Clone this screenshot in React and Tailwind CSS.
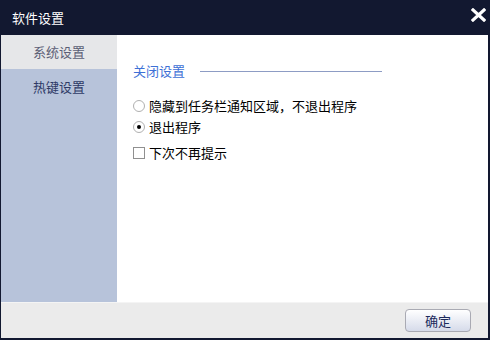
export default function App() {
    const font = { fontFamily: '"Noto Sans CJK SC", "Liberation Sans", sans-serif' };
    return (
        <div className="w-[490px] h-[340px] bg-[#121830] flex flex-col" style={font}>
            <div className="h-[35px] flex items-center justify-between pl-[12px] pr-[4px] shrink-0">
                <span className="text-[13px] text-white">软件设置</span>
                <svg width="15" height="14" viewBox="0 0 15 14" className="mb-[5px]">
                    <path d="M2 2 L13 12 M13 2 L2 12" stroke="#ffffff" strokeWidth="3.2" strokeLinecap="square" />
                </svg>
            </div>
            <div className="flex-1 flex flex-col ml-[1px] mr-[2px] mb-[2px] bg-white">
                <div className="flex flex-1">
                    <div className="w-[116px] bg-[#b7c3da] flex flex-col">
                        <div className="h-[34px] bg-[#e6e7e9] flex items-center justify-center text-[13px] text-[#5c6076]">
                            系统设置
                        </div>
                        <div className="h-[36px] flex items-center justify-center text-[13px] text-[#2e3a66]">
                            热键设置
                        </div>
                    </div>
                    <div className="flex-1 pl-[16px] pt-[27px]">
                        <div className="flex items-center h-[18px]">
                            <span className="text-[13px] text-[#3d70d6]">关闭设置</span>
                            <div className="ml-[15px] w-[182px] h-px bg-[#8d9cc4]" />
                        </div>
                        <div className="mt-[15px] flex flex-col">
                            <label className="flex items-center h-[21px]">
                                <span className="w-[12px] h-[12px] rounded-full border border-[#b0b0b0] bg-white" />
                                <span className="ml-[4px] text-[13px] text-black">隐藏到任务栏通知区域，不退出程序</span>
                            </label>
                            <label className="flex items-center h-[21px]">
                                <span className="w-[12px] h-[12px] rounded-full border border-[#b0b0b0] bg-white flex items-center justify-center">
                                    <span className="w-[4px] h-[4px] rounded-full bg-black" />
                                </span>
                                <span className="ml-[4px] text-[13px] text-black">退出程序</span>
                            </label>
                            <label className="flex items-center h-[21px] mt-[5px]">
                                <span className="w-[12px] h-[12px] border border-[#909090] bg-white" />
                                <span className="ml-[4px] text-[13px] text-black">下次不再提示</span>
                            </label>
                        </div>
                    </div>
                </div>
                <div className="h-[36px] bg-[#ebebeb] border-t border-[#f4f4f4] flex items-center justify-end pr-[17px]">
                    <button className="w-[66px] h-[23px] rounded-[4px] border border-[#a9aab3] bg-gradient-to-b from-[#ffffff] to-[#d6dbea] text-[13px] text-[#1c2a5c] flex items-center justify-center">
                        确定
                    </button>
                </div>
            </div>
        </div>
    );
}
